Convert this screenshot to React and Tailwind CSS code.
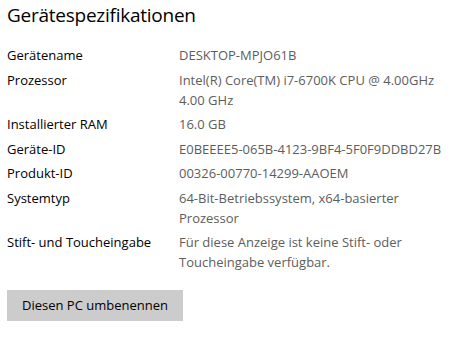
// App.jsx
// Windows 10 "Info" page fragment: device specifications list with a
// rename button underneath.

const specs = [
  { label: "Gerätename", lines: ["DESKTOP-MPJO61B"] },
  { label: "Prozessor", lines: ["Intel(R) Core(TM) i7-6700K CPU @ 4.00GHz", "4.00 GHz"] },
  { label: "Installierter RAM", lines: ["16.0 GB"] },
  { label: "Geräte-ID", lines: ["E0BEEEE5-065B-4123-9BF4-5F0F9DDBD27B"] },
  { label: "Produkt-ID", lines: ["00326-00770-14299-AAOEM"] },
  { label: "Systemtyp", lines: ["64-Bit-Betriebssystem, x64-basierter", "Prozessor"] },
  { label: "Stift- und Toucheingabe", lines: ["Für diese Anzeige ist keine Stift- oder", "Toucheingabe verfügbar."] },
];

function SpecRow({ label, lines }) {
  return (
    <div className="flex">
      <div className="w-[172px] shrink-0 text-black">{label}</div>
      <div className="text-[#5d5d5d]">
        {lines.map((line) => (
          <div key={line} className="whitespace-nowrap">
            {line}
          </div>
        ))}
      </div>
    </div>
  );
}

export default function App() {
  return (
    <div className="w-[465px] h-[344px] bg-white pl-[7px] pt-[1px] font-['Open_Sans',sans-serif] overflow-hidden">
      <h1 className="text-[19px] leading-[28px] tracking-[-0.25px] text-black">Gerätespezifikationen</h1>

      <div className="mt-[16px] flex flex-col gap-[4.5px] text-[13px] leading-[20px]">
        {specs.map((s) => (
          <SpecRow key={s.label} label={s.label} lines={s.lines} />
        ))}
      </div>

      <button className="mt-[18px] h-[31px] w-[176px] bg-[#cccccc] text-[13px] text-black">
        Diesen PC umbenennen
      </button>
    </div>
  );
}
